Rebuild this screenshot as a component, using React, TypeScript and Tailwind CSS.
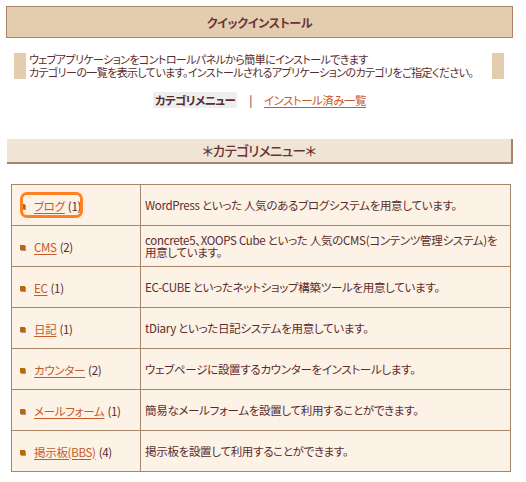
import React from 'react';

type Category = {
  name: string;
  count: number;
  desc: React.ReactNode;
  highlight?: boolean;
};

const categories: Category[] = [
  { name: 'ブログ', count: 1, desc: 'WordPress といった 人気のあるブログシステムを用意しています。', highlight: true },
  {
    name: 'CMS',
    count: 2,
    desc: (
      <>
        <span className="whitespace-nowrap">concrete5、XOOPS Cube といった 人気のCMS(コンテンツ管理システム)を</span>
        <br />
        用意しています。
      </>
    ),
  },
  { name: 'EC', count: 1, desc: 'EC-CUBE といったネットショップ構築ツールを用意しています。' },
  { name: '日記', count: 1, desc: 'tDiary といった日記システムを用意しています。' },
  { name: 'カウンター', count: 2, desc: 'ウェブページに設置するカウンターをインストールします。' },
  { name: 'メールフォーム', count: 1, desc: '簡易なメールフォームを設置して利用することができます。' },
  { name: '掲示板(BBS)', count: 4, desc: '掲示板を設置して利用することができます。' },
];

const Bullet = () => (
  <span className="inline-block w-[5px] h-[5px] bg-[#b8680e] shadow-[1px_1px_0_#9a9a9a] mr-[9px]" />
);

export default function App() {
  return (
    <div className="bg-white w-[526px] h-[482px] pt-[6px] pl-[6px] text-[11.5px] leading-[13px] tracking-[-0.3px] text-[#5a2c2c] [font-family:'Noto_Sans_CJK_JP',sans-serif] [font-feature-settings:'palt']">
      {/* title */}
      <div className="w-[507px] h-[32px] border border-[#a8846a] bg-[#e3cdae] flex items-center justify-center">
        <span className="font-bold text-[12px] text-[#6a3436]">クイックインストール</span>
      </div>

      {/* intro */}
      <div className="ml-[8px] mt-[15px] w-[490px] h-[26px] border-l-[12px] border-r-[12px] border-[#e3cdae] pl-[3px] whitespace-nowrap text-[11px] tracking-[-0.6px]">
        <p>ウェブアプリケーションをコントロールパネルから簡単にインストールできます</p>
        <p>カテゴリーの一覧を表示しています。インストールされるアプリケーションのカテゴリをご指定ください。</p>
      </div>

      {/* nav */}
      <div className="mt-[13px] flex items-center justify-center w-[507px] h-[16px]">
        <span className="bg-[#eeeeee] font-bold px-[2px] h-[16px] leading-[16px] tracking-[-0.6px]">カテゴリメニュー</span>
        <span className="mx-[12px]">|</span>
        <a href="#" className="text-[#c85a28] underline underline-offset-2 tracking-[-0.5px]">インストール済み一覧</a>
      </div>

      {/* section header */}
      <div className="ml-[1px] mt-[31px] w-[506px] h-[25px] bg-[#f0e4d4] border-b-2 border-r-2 border-[#a8866a] flex items-center justify-center">
        <span className="text-[13.5px] font-medium text-[#6a3436] tracking-[-0.6px]">＊カテゴリメニュー＊</span>
      </div>

      {/* table */}
      <table className="ml-[5px] mt-[20px] w-[500px] table-fixed border-collapse bg-[#fdf2e6]">
        <colgroup>
          <col className="w-[129px]" />
          <col />
        </colgroup>
        <tbody>
          {categories.map((c) => (
            <tr key={c.name} className="h-[41px]">
              <td className="relative border border-[#a8866a] pl-[8px] align-middle">
                <span className="inline-flex items-center whitespace-nowrap">
                  <Bullet />
                  <a href="#" className="text-[#c85a28] underline underline-offset-2">{c.name}</a>
                  <span className="ml-[3px]">({c.count})</span>
                </span>
                {c.highlight && (
                  <span className="absolute left-[8px] top-[7px] w-[63px] h-[26px] border-[3px] border-[#ff8020] rounded-[7px]" />
                )}
              </td>
              <td className="border border-[#a8866a] pl-[4px] pr-[4px] align-middle leading-[12.5px]">{c.desc}</td>
            </tr>
          ))}
        </tbody>
      </table>
    </div>
  );
}
